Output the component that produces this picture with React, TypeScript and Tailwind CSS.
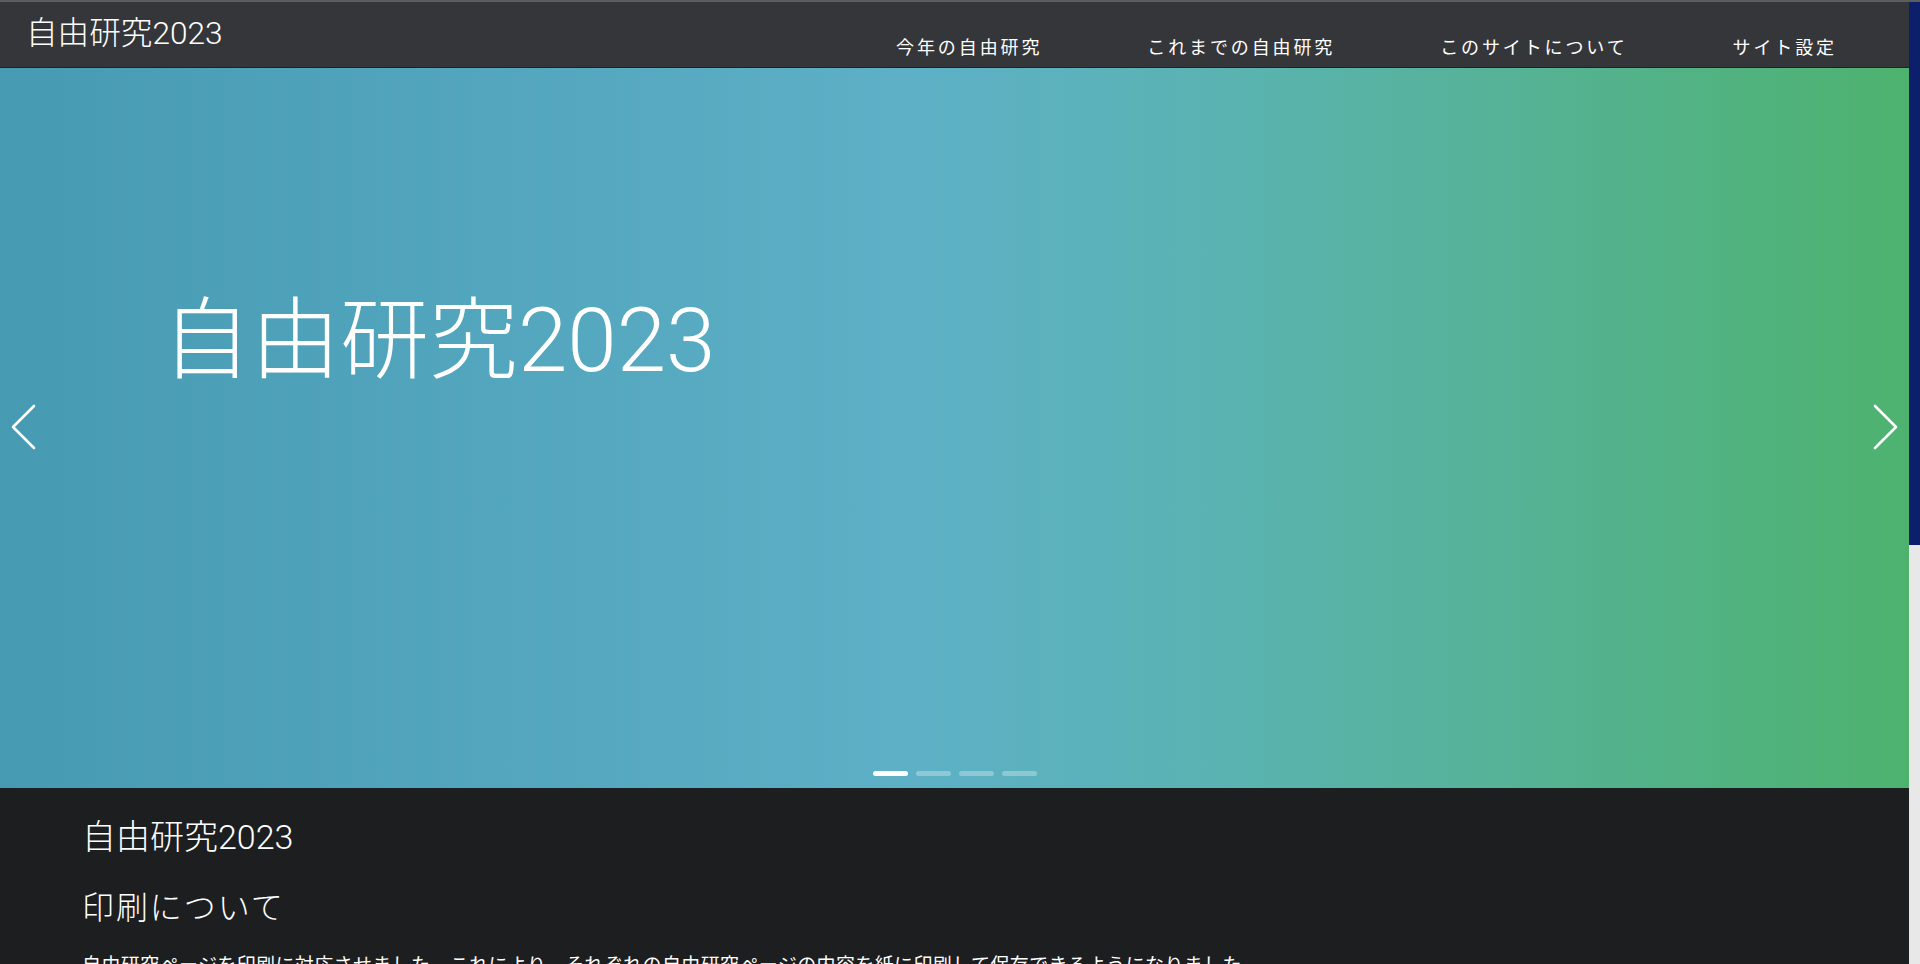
const navItems = ["今年の自由研究", "これまでの自由研究", "このサイトについて", "サイト設定"];

function Chevron({ dir }: { dir: "left" | "right" }) {
    const points = dir === "left" ? "24,2 3,23 24,44" : "3,2 24,23 3,44";
    return <svg width="27" height="46" viewBox="0 0 27 46" fill="none">
        <polyline points={points} stroke="white" strokeWidth="2.6" strokeLinecap="round" strokeLinejoin="round" />
    </svg>;
}

export default function App() {
    return <div className="h-screen flex flex-col bg-[#1d1e20] font-['Roboto','Noto_Sans_CJK_JP',sans-serif]">
        <div className="h-[2px] shrink-0 bg-[#5c5d61]" />
        <div className="flex-1 flex min-h-0">
            <div className="flex-1 min-w-0 overflow-hidden">
                {/* HEADER */}
                <header className="h-[66px] flex items-start justify-between bg-[#35363a] border-b border-[#202124]">
                    <a className="pl-[26px] pt-[12px] text-[31.6px] leading-[40px] font-light text-white">自由研究2023</a>
                    <nav className="flex gap-[105px] pr-[72px] pt-[34px]">
                        {navItems.map((item) => <a key={item} className="text-[18px] leading-[24px] tracking-[0.16em] text-white">{item}</a>)}
                    </nav>
                </header>

                {/* CAROUSEL */}
                <section className="relative h-[720px] bg-[linear-gradient(90deg,#469ab2_0%,#5db0c6_48%,#5ab3b0_65%,#4eb26f_100%)]">
                    <h1 className="pl-[162px] pt-[228px] text-[89px] leading-none font-light text-white">自由研究2023</h1>
                    <button className="absolute left-[10px] top-[336px]"><Chevron dir="left" /></button>
                    <button className="absolute right-[10px] top-[336px]"><Chevron dir="right" /></button>
                    <div className="absolute bottom-[12px] left-0 right-0 flex justify-center gap-[8px]">
                        <span className="w-[35px] h-[5px] rounded-full bg-white" />
                        <span className="w-[35px] h-[5px] rounded-full bg-white/30" />
                        <span className="w-[35px] h-[5px] rounded-full bg-white/30" />
                        <span className="w-[35px] h-[5px] rounded-full bg-white/30" />
                    </div>
                </section>

                {/* CONTENT */}
                <main className="pl-[82px] pr-[82px] pt-[29px] text-white">
                    <h2 className="text-[34px] leading-[40px] font-light">自由研究2023</h2>
                    <h3 className="mt-[31px] text-[32px] leading-[40px] font-light tracking-[0.06em]">印刷について</h3>
                    <p className="mt-[22px] text-[19px] leading-[32px] tracking-[0.02em]">自由研究ページを印刷に対応させました。これにより、それぞれの自由研究ページの内容を紙に印刷して保存できるようになりました。</p>
                    <p className="mt-[20px] text-[19px] leading-[32px]">印刷するときは、ブラウザの印刷機能を使ってください。背景の色は自動的に白に変わります。</p>
                </main>
            </div>

            {/* SCROLLBAR */}
            <div className="w-[11px] shrink-0 flex flex-col bg-[#e8e8e8]">
                <div className="h-[543px] bg-[#0c1f6b]" />
            </div>
        </div>
    </div>;
}
